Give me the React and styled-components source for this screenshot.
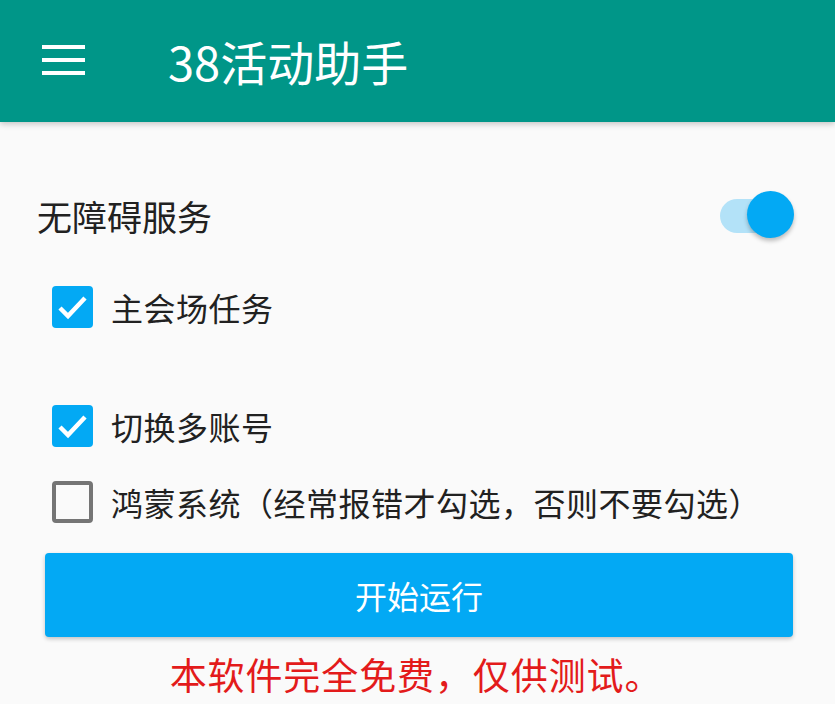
import React, { useState } from 'react';
import styled, { createGlobalStyle } from 'styled-components';

const GlobalStyle = createGlobalStyle`
  html, body {
    margin: 0;
    padding: 0;
    background: #fafafa;
  }
  body {
    font-family: "Noto Sans CJK SC", "Noto Sans", Roboto, sans-serif;
  }
`;

const Page = styled.div`
  min-height: 704px;
  background: #fafafa;
`;

const Toolbar = styled.header`
  height: 122px;
  background: #009688;
  display: flex;
  align-items: center;
  padding-left: 42px;
  box-shadow: 0 2px 6px rgba(0, 0, 0, 0.22);
  position: relative;
`;

const Burger = styled.div`
  width: 43px;
  display: flex;
  flex-direction: column;
  gap: 9px;
  margin-top: -2px;
  span {
    display: block;
    height: 4px;
    background: #ffffff;
  }
`;

const Title = styled.h1`
  margin: -2px 0 0 83px;
  font-size: 47px;
  font-weight: 400;
  color: #ffffff;
  line-height: 1;
`;

const Content = styled.main`
  padding: 68px 42px 0 37px;
`;

const SettingRow = styled.div`
  height: 50px;
  display: flex;
  align-items: center;
  justify-content: space-between;
`;

const SettingLabel = styled.span`
  font-size: 35px;
  color: #212121;
`;

const Switch = styled.div`
  position: relative;
  width: 76px;
  height: 50px;
  cursor: pointer;
`;

const Track = styled.div`
  position: absolute;
  left: 3px;
  top: 9px;
  width: 64px;
  height: 34px;
  border-radius: 17px;
  background: ${p => (p.$on ? '#b3e2f8' : '#c8c8c8')};
`;

const Thumb = styled.div`
  position: absolute;
  top: 1px;
  left: ${p => (p.$on ? '30px' : '0')};
  width: 47px;
  height: 47px;
  border-radius: 50%;
  background: ${p => (p.$on ? '#03a9f4' : '#f1f1f1')};
  box-shadow: 0 3px 4px rgba(0, 0, 0, 0.25);
`;

const CheckRow = styled.label`
  display: flex;
  align-items: center;
  height: 60px;
  margin-top: ${p => p.$gap}px;
  padding-left: 15px;
  cursor: pointer;
`;

const Box = styled.span`
  width: 41px;
  height: 42px;
  box-sizing: border-box;
  border-radius: 4px;
  flex-shrink: 0;
  display: flex;
  align-items: center;
  justify-content: center;
  background: ${p => (p.$checked ? '#03a9f4' : 'transparent')};
  border: ${p => (p.$checked ? 'none' : '4px solid #757575')};
`;

const CheckText = styled.span`
  margin-left: 18px;
  font-size: 32px;
  letter-spacing: 0.5px;
  color: #212121;
  white-space: nowrap;
`;

const RunButton = styled.button`
  display: block;
  width: calc(100% - 8px);
  margin: 21px 0 0 8px;
  height: 84px;
  border: none;
  border-radius: 4px;
  background: #03a9f4;
  color: #ffffff;
  font-family: inherit;
  font-size: 32px;
  box-shadow: 0 2px 4px rgba(0, 0, 0, 0.22);
  cursor: pointer;
`;

const Notice = styled.p`
  margin: 12px 0 0;
  text-align: center;
  font-size: 37px;
  letter-spacing: 0.9px;
  line-height: 50px;
  color: #e31b1b;
  padding-left: 2px;
`;

const Checkbox = ({ checked, label, gap, onToggle }) => (
  <CheckRow $gap={gap} onClick={onToggle}>
    <Box $checked={checked}>
      {checked && (
        <svg width="41" height="42" viewBox="0 0 41 42">
          <polyline
            points="8,22 16,30 33,12"
            fill="none"
            stroke="#ffffff"
            strokeWidth="4.5"
          />
        </svg>
      )}
    </Box>
    <CheckText>{label}</CheckText>
  </CheckRow>
);

export default function App() {
  const [service, setService] = useState(true);
  const [opts, setOpts] = useState({ main: true, multi: true, harmony: false });
  const toggle = key => setOpts(o => ({ ...o, [key]: !o[key] }));

  return (
    <Page>
      <GlobalStyle />
      <Toolbar>
        <Burger>
          <span />
          <span />
          <span />
        </Burger>
        <Title>38活动助手</Title>
      </Toolbar>
      <Content>
        <SettingRow>
          <SettingLabel>无障碍服务</SettingLabel>
          <Switch onClick={() => setService(s => !s)}>
            <Track $on={service} />
            <Thumb $on={service} />
          </Switch>
        </SettingRow>
        <Checkbox gap={37} checked={opts.main} label="主会场任务" onToggle={() => toggle('main')} />
        <Checkbox gap={59} checked={opts.multi} label="切换多账号" onToggle={() => toggle('multi')} />
        <Checkbox
          gap={16}
          checked={opts.harmony}
          label="鸿蒙系统（经常报错才勾选，否则不要勾选）"
          onToggle={() => toggle('harmony')}
        />
        <RunButton>开始运行</RunButton>
        <Notice>本软件完全免费，仅供测试。</Notice>
      </Content>
    </Page>
  );
}
